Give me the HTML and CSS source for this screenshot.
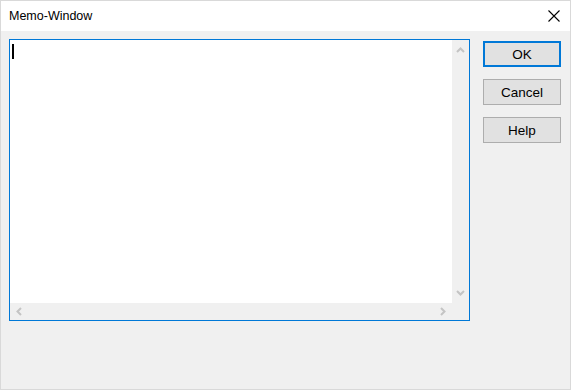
FILE: index.html
```html
<!DOCTYPE html>
<html>
<head>
<meta charset="utf-8">
<link rel="stylesheet" href="styles.css">
</head>
<body>
<div class="window">
  <div class="titlebar">
    <span class="title">Memo-Window</span>
    <svg class="close" width="12" height="12" viewBox="0 0 12 12"><path d="M0.5 0.5 L11.5 11.5 M11.5 0.5 L0.5 11.5" stroke="#000" stroke-width="1.1" fill="none"/></svg>
  </div>
  <div class="body">
    <div class="memo">
      <div class="editor"><span class="caret"></span></div>
      <div class="vscroll">
        <svg width="9" height="6" viewBox="0 0 9 6"><path d="M1 5 L4.5 1.5 L8 5" stroke="#c4c4c4" stroke-width="2" fill="none"/></svg>
        <svg width="9" height="6" viewBox="0 0 9 6"><path d="M1 1 L4.5 4.5 L8 1" stroke="#c4c4c4" stroke-width="2" fill="none"/></svg>
      </div>
      <div class="hscroll">
        <svg width="6" height="9" viewBox="0 0 6 9"><path d="M5 1 L1.5 4.5 L5 8" stroke="#c4c4c4" stroke-width="2" fill="none"/></svg>
        <svg width="6" height="9" viewBox="0 0 6 9"><path d="M1 1 L4.5 4.5 L1 8" stroke="#c4c4c4" stroke-width="2" fill="none"/></svg>
      </div>
      <div class="corner"></div>
    </div>
    <div class="buttons">
      <button class="btn default">OK</button>
      <button class="btn">Cancel</button>
      <button class="btn">Help</button>
    </div>
  </div>
</div>
</body>
</html>
```
FILE: styles.css
```css
html, body {
  margin: 0;
  padding: 0;
  background: #ffffff;
}
.window {
  width: 571px;
  height: 390px;
  box-sizing: border-box;
  border: 1px solid #d9d9d9;
  background: #f0f0f0;
  display: flex;
  flex-direction: column;
  font-family: "Liberation Sans", Arial, sans-serif;
  color: #000;
}
.titlebar {
  height: 30px;
  background: #ffffff;
  display: flex;
  align-items: center;
  justify-content: space-between;
  padding: 0 10px 0 8px;
  flex: none;
}
.title {
  font-size: 12.5px;
}
.close {
  display: block;
}
.body {
  display: flex;
  padding: 8px 0 0 8px;
  gap: 13px;
  align-items: flex-start;
}
.memo {
  width: 461px;
  height: 282px;
  box-sizing: border-box;
  border: 1px solid #0078d7;
  display: grid;
  grid-template-columns: 442px 17px;
  grid-template-rows: 263px 17px;
  background: #f0f0f0;
}
.editor {
  background: #ffffff;
  padding: 4px 0 0 2px;
}
.caret {
  display: block;
  width: 2px;
  height: 15px;
  background: #000;
}
.vscroll {
  display: flex;
  flex-direction: column;
  justify-content: space-between;
  align-items: center;
  padding: 7px 0 7px 0;
}
.hscroll {
  display: flex;
  justify-content: space-between;
  align-items: center;
  padding: 0 6px 0 6px;
}
.vscroll svg, .hscroll svg {
  display: block;
}
.buttons {
  display: flex;
  flex-direction: column;
  gap: 12px;
  padding-top: 2px;
}
.btn {
  width: 78px;
  height: 26px;
  box-sizing: border-box;
  border: 1px solid #adadad;
  background: #e1e1e1;
  font-family: "Liberation Sans", Arial, sans-serif;
  font-size: 13.5px;
  color: #000;
  padding: 0;
  margin: 0;
}
.btn.default {
  border: 2px solid #0078d7;
}
```
